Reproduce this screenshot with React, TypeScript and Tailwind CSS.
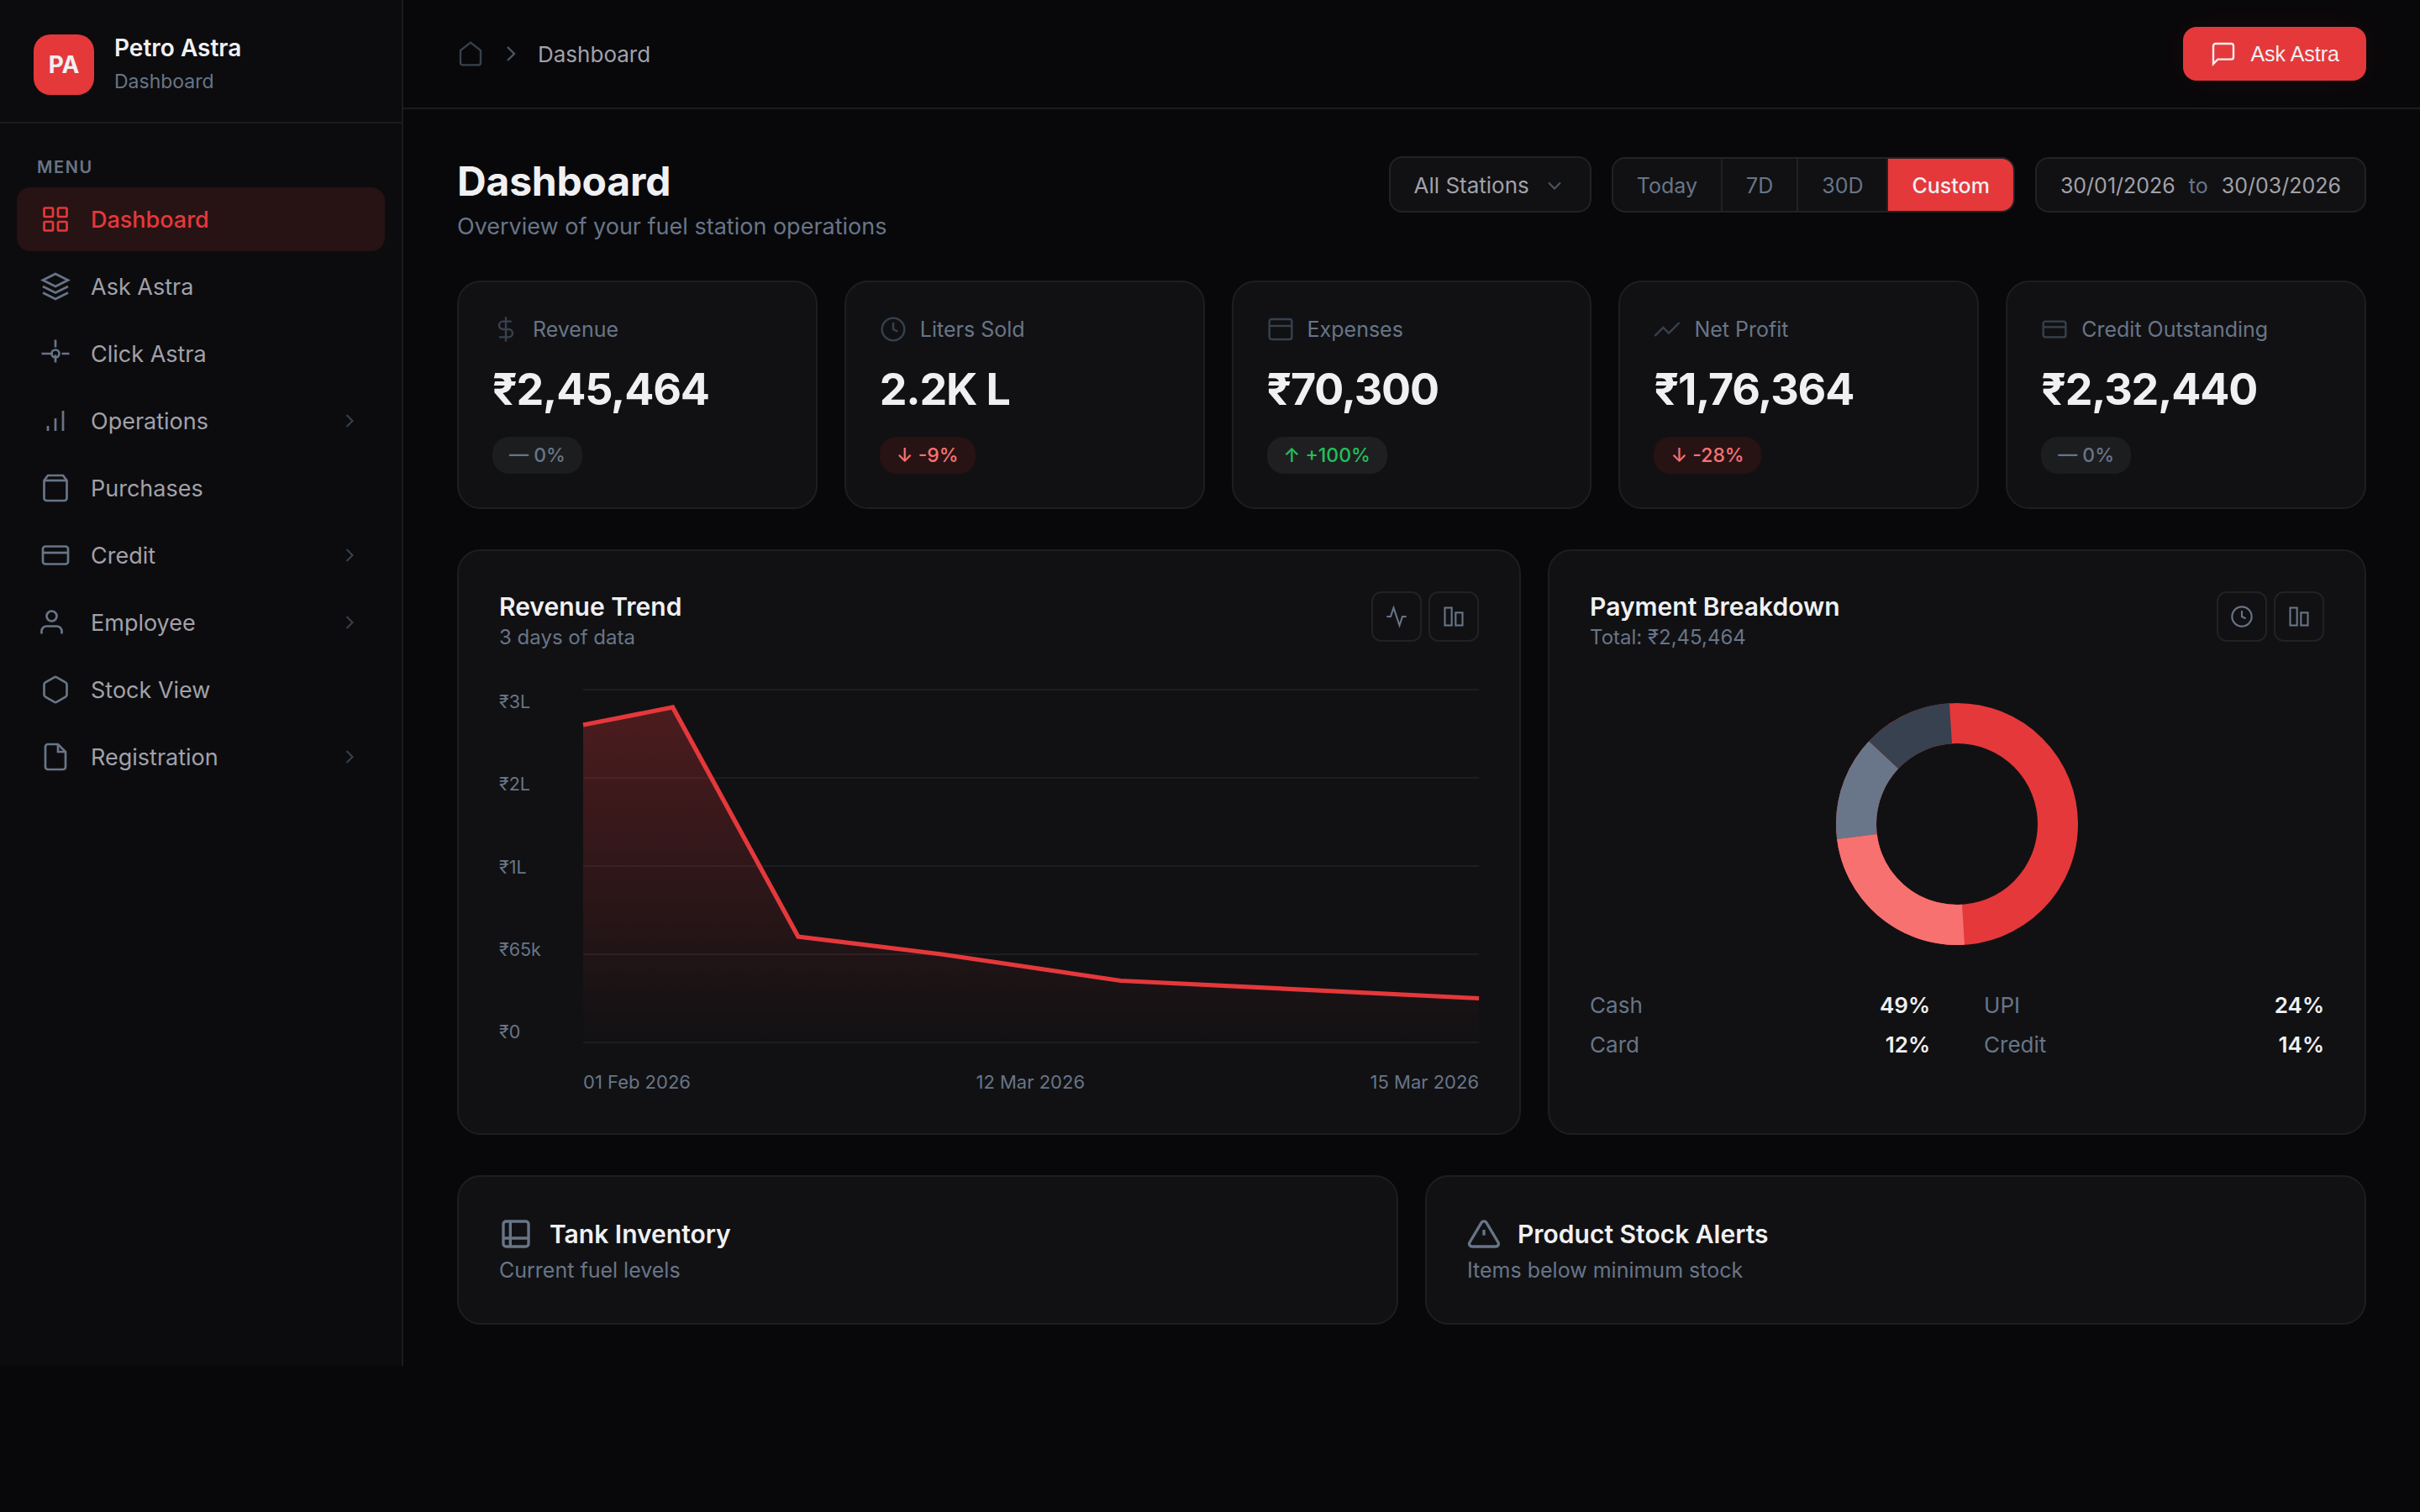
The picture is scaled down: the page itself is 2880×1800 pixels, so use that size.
import React from 'react';

type IconName = keyof typeof ICONS;

const ICONS = {
  home: <path d="M3 9l9-7 9 7v11a2 2 0 0 1-2 2H5a2 2 0 0 1-2-2z" />,
  chevronRight: <polyline points="9 18 15 12 9 6" />,
  chevronDown: <polyline points="6 9 12 15 18 9" />,
  message: <path d="M21 15a2 2 0 0 1-2 2H7l-4 4V5a2 2 0 0 1 2-2h14a2 2 0 0 1 2 2z" />,
  grid: (
    <>
      <rect x="3" y="3" width="7" height="7" rx="1" />
      <rect x="14" y="3" width="7" height="7" rx="1" />
      <rect x="3" y="14" width="7" height="7" rx="1" />
      <rect x="14" y="14" width="7" height="7" rx="1" />
    </>
  ),
  layers: (
    <>
      <path d="M12 2L2 7l10 5 10-5-10-5z" />
      <path d="M2 17l10 5 10-5" />
      <path d="M2 12l10 5 10-5" />
    </>
  ),
  target: (
    <>
      <circle cx="12" cy="12" r="3" />
      <path d="M12 1v6M12 13v6M1 12h9M17 12h6" />
    </>
  ),
  bars: <path d="M12 20V10M18 20V4M6 20v-4" />,
  bag: (
    <>
      <path d="M6 2L3 6v14a2 2 0 0 0 2 2h14a2 2 0 0 0 2-2V6l-3-4z" />
      <line x1="3" y1="6" x2="21" y2="6" />
    </>
  ),
  card: (
    <>
      <rect x="2" y="5" width="20" height="14" rx="2" />
      <line x1="2" y1="10" x2="22" y2="10" />
    </>
  ),
  user: (
    <>
      <path d="M17 21v-2a4 4 0 0 0-4-4H5a4 4 0 0 0-4 4v2" />
      <circle cx="9" cy="7" r="4" />
    </>
  ),
  box: (
    <path d="M21 16V8a2 2 0 0 0-1-1.73l-7-4a2 2 0 0 0-2 0l-7 4A2 2 0 0 0 3 8v8a2 2 0 0 0 1 1.73l7 4a2 2 0 0 0 2 0l7-4A2 2 0 0 0 21 16z" />
  ),
  file: (
    <>
      <path d="M14 2H6a2 2 0 0 0-2 2v16a2 2 0 0 0 2 2h12a2 2 0 0 0 2-2V8z" />
      <polyline points="14 2 14 8 20 8" />
    </>
  ),
  dollar: (
    <>
      <line x1="12" y1="1" x2="12" y2="23" />
      <path d="M17 5H9.5a3.5 3.5 0 0 0 0 7h5a3.5 3.5 0 0 1 0 7H6" />
    </>
  ),
  clock: (
    <>
      <circle cx="12" cy="12" r="10" />
      <polyline points="12 6 12 12 16 14" />
    </>
  ),
  panel: (
    <>
      <rect x="2" y="3" width="20" height="18" rx="2" />
      <line x1="2" y1="9" x2="22" y2="9" />
    </>
  ),
  trend: <polyline points="23 6 13.5 15.5 8.5 10.5 1 18" />,
  activity: <polyline points="22 12 18 12 15 21 9 3 6 12 2 12" />,
  columns: (
    <>
      <rect x="3" y="3" width="7" height="18" />
      <rect x="14" y="8" width="7" height="13" />
    </>
  ),
  tank: (
    <>
      <rect x="3" y="3" width="18" height="18" rx="2" />
      <path d="M3 15h18M8 3v18" />
    </>
  ),
  alert: (
    <>
      <path d="M10.29 3.86L1.82 18a2 2 0 0 0 1.71 3h16.94a2 2 0 0 0 1.71-3L13.71 3.86a2 2 0 0 0-3.42 0z" />
      <line x1="12" y1="9" x2="12" y2="13" />
    </>
  ),
};

function Icon({ name, className, width = 1.8 }: { name: IconName; className: string; width?: number }) {
  return (
    <svg viewBox="0 0 24 24" fill="none" stroke="currentColor" strokeWidth={width} className={`shrink-0 ${className}`}>
      {ICONS[name]}
    </svg>
  );
}

const navItems: { label: string; icon: IconName; active?: boolean; expandable?: boolean }[] = [
  { label: 'Dashboard', icon: 'grid', active: true },
  { label: 'Ask Astra', icon: 'layers' },
  { label: 'Click Astra', icon: 'target' },
  { label: 'Operations', icon: 'bars', expandable: true },
  { label: 'Purchases', icon: 'bag' },
  { label: 'Credit', icon: 'card', expandable: true },
  { label: 'Employee', icon: 'user', expandable: true },
  { label: 'Stock View', icon: 'box' },
  { label: 'Registration', icon: 'file', expandable: true },
];

const stats: { label: string; icon: IconName; value: string; change: string; tone: 'flat' | 'up' | 'down' }[] = [
  { label: 'Revenue', icon: 'dollar', value: '₹2,45,464', change: '— 0%', tone: 'flat' },
  { label: 'Liters Sold', icon: 'clock', value: '2.2K L', change: '↓ -9%', tone: 'down' },
  { label: 'Expenses', icon: 'panel', value: '₹70,300', change: '↑ +100%', tone: 'up' },
  { label: 'Net Profit', icon: 'trend', value: '₹1,76,364', change: '↓ -28%', tone: 'down' },
  { label: 'Credit Outstanding', icon: 'card', value: '₹2,32,440', change: '— 0%', tone: 'flat' },
];

const toneStyles = {
  flat: 'bg-[#1c1d1f] text-[#687588]',
  up: 'bg-[#1f1f21] text-[#22bf5b]',
  down: 'bg-[#271314] text-[#f87171]',
};

const payments = [
  { label: 'Cash', value: 49, start: 0, color: '#e5383b' },
  { label: 'UPI', value: 24, start: 49, color: '#f87171' },
  { label: 'Card', value: 12, start: 87, color: '#37414f' },
  { label: 'Credit', value: 14, start: 73, color: '#697689' },
];

function Sidebar() {
  return (
    <aside className="w-[480px] shrink-0 border-r-2 border-[#1c1c1e] bg-[#0c0c0e]">
      <div className="flex h-[147px] items-start gap-6 border-b-2 border-[#1c1c1e] px-10 pt-10">
        <div className="mt-px flex size-[72px] items-center justify-center rounded-[20px] bg-[#e5383b] text-[28px] font-bold text-[#f0f0f2]">
          PA
        </div>
        <div>
          <div className="text-[28px] font-semibold text-[#f0f0f2]">Petro Astra</div>
          <div className="mt-[9px] text-[23px] text-[#687588]">Dashboard</div>
        </div>
      </div>
      <div className="px-11 pt-10 pb-3 text-[20px] font-semibold tracking-[0.08em] text-[#687588]">MENU</div>
      <nav className="flex flex-col gap-1 px-5">
        {navItems.map((item) => (
          <a
            key={item.label}
            className={`flex h-[76px] items-center gap-6 rounded-2xl px-7 text-[27px] ${
              item.active ? 'bg-[#271314] font-medium text-[#e5383b]' : 'text-[#a1a1aa]'
            }`}
          >
            <Icon name={item.icon} className={`size-9 ${item.active ? '' : 'text-[#687588]'}`} />
            <span className="flex-1">{item.label}</span>
            {item.expandable && <Icon name="chevronRight" className="size-7 text-[#37414f]" />}
          </a>
        ))}
      </nav>
    </aside>
  );
}

function Topbar() {
  return (
    <header className="flex h-[130px] items-center gap-4 border-b-2 border-[#1c1c1e] px-16">
      <Icon name="home" className="size-8 text-[#37414f]" />
      <Icon name="chevronRight" className="size-8 text-[#4b5563]" />
      <span className="text-[26px] text-[#a1a1aa]">Dashboard</span>
      <button className="ml-auto flex h-16 items-center gap-4 rounded-2xl bg-[#e5383b] px-8 font-['Liberation_Sans',sans-serif] text-[25px] text-[#f0f0f2] shadow-[0_0_40px_rgba(229,56,59,0.08)]">
        <Icon name="message" className="size-8" />
        Ask Astra
      </button>
    </header>
  );
}

function Filters() {
  return (
    <div className="flex items-center gap-6">
      <div className="flex items-center gap-4 rounded-2xl border-2 border-[#222225] bg-[#111113] px-7 pt-[17px] pb-[15px] text-[26px] text-[#a1a1aa]">
        All Stations
        <Icon name="chevronDown" className="size-7 text-[#4b5563]" />
      </div>
      <div className="flex overflow-hidden rounded-2xl border-2 border-[#222225] bg-[#111113] text-[25px] text-[#687588]">
        <span className="border-r-2 border-[#222225] px-7 pt-[17px] pb-[15px]">Today</span>
        <span className="border-r-2 border-[#222225] px-7 pt-[17px] pb-[15px]">7D</span>
        <span className="border-r-2 border-[#222225] px-7 pt-[17px] pb-[15px]">30D</span>
        <span className="bg-[#e5383b] px-7 pt-[17px] pb-[15px] font-medium text-[#f0f0f2]">Custom</span>
      </div>
      <div className="flex gap-4 rounded-2xl border-2 border-[#222225] bg-[#111113] px-7 pt-[17px] pb-[15px] text-[25px] text-[#a1a1aa]">
        <span>30/01/2026</span>
        <span className="text-[#687588]">to</span>
        <span>30/03/2026</span>
      </div>
    </div>
  );
}

function ChartHeader({ title, text, icons }: { title: string; text: string; icons: IconName[] }) {
  return (
    <div className="flex items-start justify-between">
      <div>
        <h2 className="text-[30px] leading-[36px] font-semibold text-[#f0f0f2]">{title}</h2>
        <p className="mt-1 text-[24px] leading-[30px] text-[#687588]">{text}</p>
      </div>
      <div className="flex gap-2">
        {icons.map((name) => (
          <span key={name} className="flex size-[60px] items-center justify-center rounded-xl border-2 border-[#222225]">
            <Icon name={name} className="size-7 text-[#687588]" />
          </span>
        ))}
      </div>
    </div>
  );
}

function RevenueTrend() {
  const line = '0,20 50,10 120,140 200,150 300,165 500,175';
  return (
    <section className="rounded-[28px] border-2 border-[#1e1e20] bg-[#111113] p-12">
      <ChartHeader title="Revenue Trend" text="3 days of data" icons={['activity', 'columns']} />
      <div className="mt-[47px] flex h-[420px]">
        <div className="flex w-[100px] flex-col justify-between pt-px text-[21.5px] leading-[26px] text-[#687588]">
          <span>₹3L</span>
          <span>₹2L</span>
          <span>₹1L</span>
          <span>₹65k</span>
          <span>₹0</span>
        </div>
        <svg viewBox="0 0 500 200" preserveAspectRatio="none" className="h-full min-w-0 flex-1 overflow-visible">
          <defs>
            <linearGradient id="trendFill" x1="0" y1="0" x2="0" y2="1">
              <stop offset="0%" stopColor="#e5383b" stopOpacity="0.28" />
              <stop offset="100%" stopColor="#e5383b" stopOpacity="0" />
            </linearGradient>
          </defs>
          {[0, 50, 100, 150, 200].map((y) => (
            <line key={y} x1="0" y1={y} x2="500" y2={y} stroke="#1e1e20" strokeWidth="1" />
          ))}
          <polygon points={`${line} 500,200 0,200`} fill="url(#trendFill)" />
          <polyline points={line} fill="none" stroke="#e5383b" strokeWidth="2.5" />
        </svg>
      </div>
      <div className="mt-[34px] ml-[100px] flex justify-between text-[22px] leading-[26px] text-[#687588]">
        <span>01 Feb 2026</span>
        <span>12 Mar 2026</span>
        <span>15 Mar 2026</span>
      </div>
    </section>
  );
}

function PaymentBreakdown() {
  return (
    <section className="rounded-[28px] border-2 border-[#1e1e20] bg-[#111113] p-12">
      <ChartHeader title="Payment Breakdown" text="Total: ₹2,45,464" icons={['clock', 'columns']} />
      <svg viewBox="0 0 288 288" className="mx-auto mt-[63px] size-[288px]">
        <g fill="none" strokeWidth="48" transform="rotate(-90 144 144)">
          <circle cx="144" cy="144" r="120" stroke="#e5383b" />
          {payments.slice(1).map((p) => (
            <circle
              key={p.label}
              cx="144"
              cy="144"
              r="120"
              stroke={p.color}
              pathLength={100}
              strokeDasharray={`${p.value} ${100 - p.value}`}
              strokeDashoffset={-p.start}
            />
          ))}
        </g>
      </svg>
      <div className="mt-14 grid grid-cols-2 gap-x-16 gap-y-4 text-[26px]">
        {payments.map((p) => (
          <div key={p.label} className="flex justify-between">
            <span className="text-[#687588]">{p.label}</span>
            <span className="font-semibold text-[#f0f0f2]">{p.value}%</span>
          </div>
        ))}
      </div>
    </section>
  );
}

function InfoCard({ icon, title, text }: { icon: IconName; title: string; text: string }) {
  return (
    <section className="rounded-[28px] border-2 border-[#1e1e20] bg-[#111113] p-12">
      <div className="flex h-10 items-center gap-5">
        <Icon name={icon} className="size-10 text-[#687588]" width={2} />
        <h2 className="text-[30px] font-semibold text-[#f0f0f2]">{title}</h2>
      </div>
      <p className="mt-2 text-[25px] leading-[30px] text-[#687588]">{text}</p>
    </section>
  );
}

export default function App() {
  return (
    <div className="min-h-[1800px] bg-[#08080a] font-['Inter',sans-serif] leading-[normal]">
      <div className="flex">
        <Sidebar />
        <div className="min-w-0 flex-1">
          <Topbar />
          <main className="px-16 pt-14 pb-[49px]">
            <div className="flex h-[100px] items-start justify-between">
              <div>
                <h1 className="text-[48px] font-bold tracking-[-0.004em] text-[#f0f0f2]">Dashboard</h1>
                <p className="mt-2 text-[27px] text-[#687588]">Overview of your fuel station operations</p>
              </div>
              <Filters />
            </div>

            <div className="mt-12 grid grid-cols-5 gap-8">
              {stats.map((stat) => (
                <section key={stat.label} className="rounded-[28px] border-2 border-[#1e1e20] bg-[#111113] p-10">
                  <div className="flex h-8 items-center gap-4 text-[25px] text-[#687588]">
                    <Icon name={stat.icon} className="size-8 text-[#37414f]" />
                    {stat.label}
                  </div>
                  <div className="mt-6 text-[52px] leading-[63px] font-bold tracking-[-0.023em] text-[#f0f0f2]">
                    {stat.value}
                  </div>
                  <div
                    className={`mt-[25px] w-fit rounded-[20px] px-5 py-2 text-[23px] leading-[28px] font-medium ${toneStyles[stat.tone]}`}
                  >
                    {stat.change}
                  </div>
                </section>
              ))}
            </div>

            <div className="mt-12 grid grid-cols-[1.3fr_1fr] gap-8">
              <RevenueTrend />
              <PaymentBreakdown />
            </div>

            <div className="mt-12 grid grid-cols-2 gap-8">
              <InfoCard icon="tank" title="Tank Inventory" text="Current fuel levels" />
              <InfoCard icon="alert" title="Product Stock Alerts" text="Items below minimum stock" />
            </div>
          </main>
        </div>
      </div>
    </div>
  );
}
